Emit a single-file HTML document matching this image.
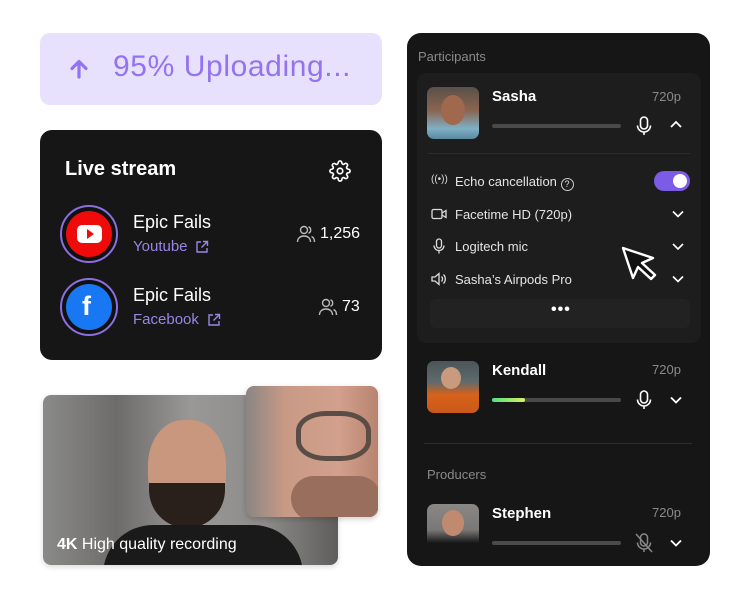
<!DOCTYPE html>
<html><head><meta charset="utf-8"><style>
*{margin:0;padding:0;box-sizing:border-box}
body{width:750px;height:598px;background:#fff;position:relative;overflow:hidden;font-family:"Liberation Sans",sans-serif}
.a{position:absolute}
.upl{left:40px;top:33px;width:342px;height:72px;background:#e8e1fd;border-radius:10px}
.card{left:40px;top:130px;width:342px;height:230px;background:#161616;border-radius:12px}
.w{color:#fff}
.pur{color:#9a85e6}
.ring{width:58px;height:58px;border-radius:50%;border:2px solid #8b6fe0;background:#111}
.ring div{position:absolute;left:4px;top:4px;width:46px;height:46px;border-radius:50%}
.panel{left:407px;top:33px;width:303px;height:533px;background:#161616;border-radius:14px}
.g{color:#8a8a8a}
.row{font-size:13px;color:#e4e4e4}
.bar{height:4px;background:#4a4a4a;border-radius:2px;width:129px}
.av{width:52px;height:52px;border-radius:7px;overflow:hidden}
</style></head><body>
<div class="a upl"></div>
<svg class="a" style="left:68px;top:58px" width="22" height="22" viewBox="0 0 22 22"><path d="M11 19V4M4 10.5L11 3.5 18 10.5" stroke="#9373f0" stroke-width="3.2" fill="none" stroke-linecap="round" stroke-linejoin="round"/></svg>
<div class="a" style="left:113px;top:50px;font-size:30px;color:#9373f0;letter-spacing:0.6px">95% Uploading...</div>

<div class="a card"></div>
<div class="a w" style="left:65px;top:158px;font-size:20px;font-weight:bold">Live stream</div>
<svg class="a" style="left:329px;top:160px" width="22" height="22" viewBox="0 0 24 24" fill="none" stroke="#fff" stroke-width="1.8"><circle cx="12" cy="12" r="3"/><path d="M19.4 15a1.65 1.65 0 0 0 .33 1.82l.06.06a2 2 0 1 1-2.830 2.83l-.06-.06a1.65 1.65 0 0 0-1.82-.33 1.65 1.65 0 0 0-1 1.51V21a2 2 0 0 1-4 0v-.09A1.65 1.65 0 0 0 9 19.4a1.65 1.65 0 0 0-1.82.33l-.06.06a2 2 0 1 1-2.83-2.83l.06-.06A1.65 1.65 0 0 0 4.68 15a1.65 1.65 0 0 0-1.51-1H3a2 2 0 0 1 0-4h.09A1.65 1.65 0 0 0 4.6 9a1.65 1.65 0 0 0-.33-1.82l-.06-.06a2 2 0 1 1 2.83-2.83l.06.06A1.65 1.65 0 0 0 9 4.68 1.65 1.65 0 0 0 10 3.17V3a2 2 0 0 1 4 0v.09a1.65 1.65 0 0 0 1 1.51 1.65 1.65 0 0 0 1.82-.33l.06-.06a2 2 0 1 1 2.83 2.83l-.06.06A1.65 1.65 0 0 0 19.4 9a1.65 1.65 0 0 0 1.51 1H21a2 2 0 0 1 0 4h-.09a1.65 1.65 0 0 0-1.51 1z"/></svg>

<div class="a ring" style="left:60px;top:205px"><div style="background:#f00b0b"></div></div>
<div class="a" style="left:77px;top:225px;width:25px;height:18px;background:#fff;border-radius:5px"></div>
<div class="a" style="left:87px;top:229px;width:0;height:0;border-left:7px solid #f00b0b;border-top:5px solid transparent;border-bottom:5px solid transparent"></div>
<div class="a ring" style="left:60px;top:278px"><div style="background:#1877f2"></div></div>
<div class="a w" style="left:82px;top:291px;font-size:27px;font-weight:bold">f</div>

<div class="a w" style="left:133px;top:212px;font-size:18px">Epic Fails</div>
<div class="a pur" style="left:133px;top:238px;font-size:15px">Youtube</div>
<svg class="a" style="left:195px;top:240px" width="14" height="14" viewBox="0 0 14 14" fill="none" stroke="#9a85e6" stroke-width="1.4"><path d="M6 2H2v10h10V8M8 1.5h4.5V6M12.5 1.5L6.5 7.5"/></svg>
<div class="a w" style="left:133px;top:285px;font-size:18px">Epic Fails</div>
<div class="a pur" style="left:133px;top:311px;font-size:15px">Facebook</div>
<svg class="a" style="left:207px;top:313px" width="14" height="14" viewBox="0 0 14 14" fill="none" stroke="#9a85e6" stroke-width="1.4"><path d="M6 2H2v10h10V8M8 1.5h4.5V6M12.5 1.5L6.5 7.5"/></svg>
<svg class="a" style="left:296px;top:225px" width="20" height="18" viewBox="0 0 20 18" fill="none" stroke="#bbb" stroke-width="1.4"><circle cx="8" cy="5" r="3.5"/><path d="M1.5 17c0-4 3-6 6.5-6s6.5 2 6.5 6M12.5 1.8a3.5 3.5 0 0 1 0 6.5M15.5 11.5c2 .8 3 2.8 3 5.5"/></svg>
<div class="a w" style="left:320px;top:225px;font-size:16px">1,256</div>
<svg class="a" style="left:318px;top:298px" width="20" height="18" viewBox="0 0 20 18" fill="none" stroke="#bbb" stroke-width="1.4"><circle cx="8" cy="5" r="3.5"/><path d="M1.5 17c0-4 3-6 6.5-6s6.5 2 6.5 6M12.5 1.8a3.5 3.5 0 0 1 0 6.5M15.5 11.5c2 .8 3 2.8 3 5.5"/></svg>
<div class="a w" style="left:342px;top:298px;font-size:16px">73</div>

<div class="a" style="left:43px;top:395px;width:295px;height:170px;border-radius:8px;overflow:hidden;background:linear-gradient(90deg,#8a8a88 0%,#6e6c6a 25%,#9a9896 50%,#8d8c8a 75%,#5e5d5c 100%);box-shadow:0 2px 6px rgba(0,0,0,.15)">
 <div class="a" style="left:105px;top:25px;width:78px;height:100px;border-radius:45%;background:#c9977e"></div>
 <div class="a" style="left:106px;top:88px;width:76px;height:45px;border-radius:0 0 40px 40px;background:#2a201b"></div>
 <div class="a" style="left:60px;top:130px;width:200px;height:60px;border-radius:50px 50px 0 0;background:#1a1a1a"></div>
 <div class="a w" style="left:14px;top:141px;font-size:16px"><b>4K</b> High quality recording</div>
</div>
<div class="a" style="left:246px;top:386px;width:132px;height:131px;border-radius:8px;overflow:hidden;background:linear-gradient(90deg,#8a8684 0%,#c89a85 30%,#d2a08c 70%,#b88470 100%);box-shadow:0 2px 6px rgba(0,0,0,.2)">
 <div class="a" style="left:50px;top:25px;width:75px;height:50px;border-radius:40%;border:5px solid #5a4d45"></div>
 <div class="a" style="left:45px;top:90px;width:90px;height:45px;background:#9a6e5c;border-radius:30px"></div>
</div>

<div class="a panel"></div>
<div class="a g" style="left:418px;top:49px;font-size:13px">Participants</div>
<div class="a" style="left:417px;top:73px;width:284px;height:270px;background:#1d1d1d;border-radius:10px"></div>
<div class="a av" style="left:427px;top:87px;background:linear-gradient(180deg,#5a5048 0%,#8a6450 45%,#7fb0c6 80%,#5a88a0 100%)"><div class="a" style="left:14px;top:8px;width:24px;height:30px;border-radius:50%;background:#a0684c"></div></div>
<div class="a w" style="left:492px;top:88px;font-size:15px;font-weight:bold">Sasha</div>
<div class="a g" style="left:652px;top:89px;font-size:13px">720p</div>
<div class="a bar" style="left:492px;top:124px"></div>
<svg class="a" style="left:635px;top:116px" width="18" height="20" viewBox="0 0 18 20" fill="none" stroke="#fff" stroke-width="1.6"><rect x="5.5" y="1" width="7" height="12" rx="3.5"/><path d="M2.5 9.5a6.5 6.5 0 0 0 13 0M9 16v3"/></svg>
<svg class="a" style="left:669px;top:120px" width="14" height="10" viewBox="0 0 14 10"><path d="M2 7l5-5 5 5" stroke="#fff" stroke-width="1.8" fill="none"/></svg>
<div class="a" style="left:428px;top:153px;width:262px;height:1px;background:#2c2c2c"></div>

<div class="a row" style="left:431px;top:174px;font-size:10px;color:#ddd">((•))</div>
<div class="a row" style="left:455px;top:174px">Echo cancellation <span style="display:inline-block;width:13px;height:13px;border:1.3px solid #ccc;border-radius:50%;font-size:9px;text-align:center;line-height:11px;vertical-align:-1px">?</span></div>
<div class="a" style="left:654px;top:171px;width:36px;height:20px;border-radius:10px;background:#7c5ce6"></div>
<div class="a" style="left:673px;top:174px;width:14px;height:14px;border-radius:50%;background:#fff"></div>
<svg class="a" style="left:431px;top:208px" width="16" height="12" viewBox="0 0 16 12" fill="none" stroke="#ddd" stroke-width="1.3"><rect x="1" y="1.5" width="10" height="9" rx="1.5"/><path d="M11 5l4-2.5v7L11 7"/></svg>
<div class="a row" style="left:455px;top:207px">Facetime HD (720p)</div>
<svg class="a" style="left:433px;top:238px" width="12" height="16" viewBox="0 0 12 16" fill="none" stroke="#ddd" stroke-width="1.3"><rect x="3.5" y="1" width="5" height="9" rx="2.5"/><path d="M1 7.5a5 5 0 0 0 10 0M6 12.5v3"/></svg>
<div class="a row" style="left:455px;top:239px">Logitech mic</div>
<svg class="a" style="left:431px;top:272px" width="16" height="14" viewBox="0 0 16 14" fill="none" stroke="#ddd" stroke-width="1.3"><path d="M1 5h3l4-3.5v11L4 9H1zM10.5 4.5a3.5 3.5 0 0 1 0 5M12.5 2.5a6.5 6.5 0 0 1 0 9"/></svg>
<div class="a row" style="left:455px;top:272px">Sasha’s Airpods Pro</div>
<svg class="a" style="left:671px;top:209px" width="14" height="80" viewBox="0 0 14 80" fill="none" stroke="#fff" stroke-width="1.6"><path d="M2 2.5l5 5 5-5M2 35l5 5 5-5M2 67.5l5 5 5-5"/></svg>
<div class="a" style="left:430px;top:299px;width:260px;height:29px;background:#222;border-radius:6px"></div>
<div class="a w" style="left:551px;top:301px;font-size:16px;font-weight:bold;letter-spacing:1px">•••</div>
<svg class="a" style="left:619px;top:244px" width="42" height="42" viewBox="0 0 42 42"><path d="M4 4l10 30 5-11 13 12 4-4-13-12 11-5z" fill="#111" stroke="#fff" stroke-width="2.4" stroke-linejoin="round"/></svg>

<div class="a av" style="left:427px;top:361px;background:linear-gradient(180deg,#4a5558 0%,#5e6a6c 40%,#d8621a 65%,#c9581a 100%)"><div class="a" style="left:14px;top:6px;width:20px;height:22px;border-radius:50%;background:#c89a7e"></div></div>
<div class="a w" style="left:492px;top:362px;font-size:15px;font-weight:bold">Kendall</div>
<div class="a g" style="left:652px;top:362px;font-size:13px">720p</div>
<div class="a bar" style="left:492px;top:398px"></div>
<div class="a" style="left:492px;top:398px;width:33px;height:4px;border-radius:2px;background:linear-gradient(90deg,#4ee081,#d8f060)"></div>
<svg class="a" style="left:635px;top:390px" width="18" height="20" viewBox="0 0 18 20" fill="none" stroke="#fff" stroke-width="1.6"><rect x="5.5" y="1" width="7" height="12" rx="3.5"/><path d="M2.5 9.5a6.5 6.5 0 0 0 13 0M9 16v3"/></svg>
<svg class="a" style="left:669px;top:395px" width="14" height="10" viewBox="0 0 14 10"><path d="M2 2.5l5 5 5-5" stroke="#fff" stroke-width="1.8" fill="none"/></svg>
<div class="a" style="left:424px;top:443px;width:268px;height:1px;background:#2c2c2c"></div>
<div class="a g" style="left:427px;top:467px;font-size:13px">Producers</div>
<div class="a av" style="left:427px;top:504px;background:linear-gradient(180deg,#8a8886 0%,#7a7876 50%,#161616 75%)"><div class="a" style="left:15px;top:6px;width:22px;height:26px;border-radius:50%;background:#c08a70"></div></div>
<div class="a w" style="left:492px;top:505px;font-size:15px;font-weight:bold">Stephen</div>
<div class="a g" style="left:652px;top:505px;font-size:13px">720p</div>
<div class="a bar" style="left:492px;top:541px"></div>
<svg class="a" style="left:635px;top:533px" width="18" height="20" viewBox="0 0 18 20" fill="none" stroke="#888" stroke-width="1.5"><rect x="5.5" y="1" width="7" height="12" rx="3.5"/><path d="M2.5 9.5a6.5 6.5 0 0 0 13 0M9 16v3M1 1l16 18"/></svg>
<svg class="a" style="left:669px;top:538px" width="14" height="10" viewBox="0 0 14 10"><path d="M2 2.5l5 5 5-5" stroke="#fff" stroke-width="1.8" fill="none"/></svg>
</body></html>
